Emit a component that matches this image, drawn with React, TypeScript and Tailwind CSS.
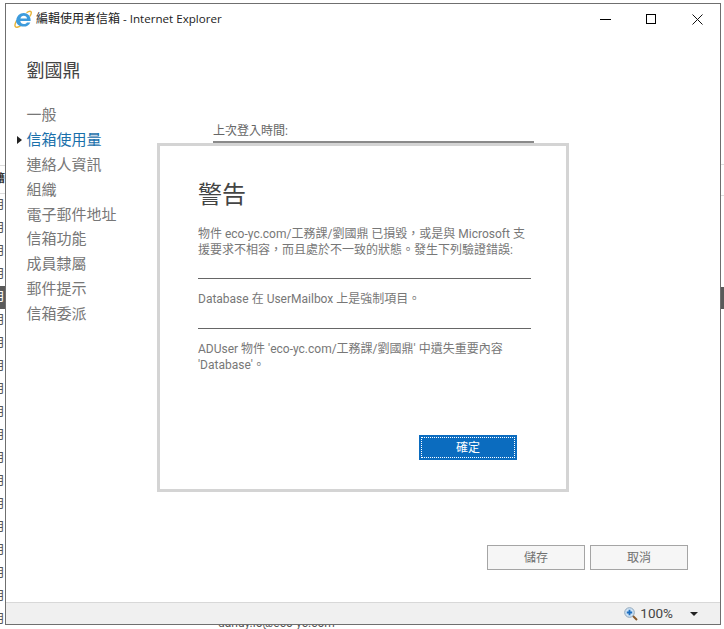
const font = "font-['Roboto','Noto_Sans_CJK_TC',sans-serif]";

const navItems = ["一般", "信箱使用量", "連絡人資訊", "組織", "電子郵件地址", "信箱功能", "成員隸屬", "郵件提示", "信箱委派"];

function IeLogo() {
  return (
    <svg width="18" height="18" viewBox="0 0 18 18" fill="none" aria-hidden>
      <path d="M2.600 10.500C1 13.500.4 16 1.600 16.900c1.300.9 3.700-.1 5.900-1.900" stroke="#e8b63c" strokeWidth="1.500" />
      <path d="M12.500 2.800C14.500 1.400 16.300.9 17 1.700c.7.900.1 2.700-1.100 4.600" stroke="#e8b63c" strokeWidth="1.400" />
      <path d="M2.300 10.200C2.500 6 5.700 2.900 9.800 2.900c3.900 0 6.800 2.900 6.800 7.100v1H6.300c.2 1.900 1.700 3 3.500 3 1.400 0 2.500-.6 3.100-1.600h3.400c-1 2.700-3.500 4.200-6.500 4.200-4.100 0-7.900-2.300-7.800-6.400Zm4.100-1.700h6.700c-.2-1.600-1.600-2.800-3.300-2.800-1.800 0-3.100 1.100-3.400 2.800Z" fill="#3d9bdc" />
    </svg>
  );
}

function ZoomIcon() {
  return (
    <svg width="14" height="14" viewBox="0 0 14 14" fill="none" aria-hidden>
      <path d="M8.500 8.500 13 13" stroke="#8a5a2b" strokeWidth="2" />
      <circle cx="5.500" cy="5.500" r="4.800" fill="#cfe3f5" stroke="#8fa6bb" />
      <path d="M5.500 2.800v5.400M2.800 5.500h5.400" stroke="#1f6fc0" strokeWidth="1.800" />
    </svg>
  );
}

function BackgroundSliver() {
  return (
    <div className="flex h-full w-[5px] shrink-0 flex-col overflow-hidden pt-[165px]">
      <div className="flex h-[28.500px] shrink-0 items-center justify-end border-y border-[#dcdcdc] text-[11px] font-bold text-[#333]">籍</div>
      {Array.from({ length: 19 }).map((_, i) => (
        <div
          key={i}
          className={`flex h-[23px] shrink-0 items-center justify-end whitespace-nowrap text-[12px] ${
            i === 4 ? "bg-[#5a5a5a] text-white" : "text-[#555]"
          }`}
        >
          月
        </div>
      ))}
    </div>
  );
}

function WindowButton({ children }: { children: React.ReactNode }) {
  return <div className="flex h-[30px] w-[46px] items-center justify-center">{children}</div>;
}

export default function App() {
  return (
    <div className={`relative h-[629px] w-[724px] overflow-hidden bg-white ${font}`}>
      {/* page text showing under the window */}
      <div className="absolute left-[218px] top-[614px] text-[12px] text-[#555]">danuy.lo@eco-yc.com</div>

      <div className="flex h-full">
        <BackgroundSliver />

        <div className="flex h-[622px] w-[716px] shrink-0 translate-y-[3px] flex-col border border-[#6f6f6f] bg-white">
          {/* title bar */}
          <div className="flex h-[30px] shrink-0 items-center pl-[8px]">
            <IeLogo />
            <span className="ml-[4px] text-[12px] text-[#222]">
              編輯使用者信箱<span className="font-['Open_Sans',sans-serif] text-[11.600px]"> - Internet Explorer</span>
            </span>
            <div className="ml-auto flex">
              <WindowButton>
                <div className="h-px w-[11px] bg-black" />
              </WindowButton>
              <WindowButton>
                <div className="h-[10px] w-[10px] border border-black" />
              </WindowButton>
              <WindowButton>
                <svg width="11" height="11" viewBox="0 0 11 11" stroke="#111" aria-hidden>
                  <path d="M.500.500l10 10M10.500.500l-10 10" />
                </svg>
              </WindowButton>
            </div>
          </div>

          <div className="flex min-h-0 flex-1">
            <div className="w-[207px] shrink-0 pl-[20.500px] pt-[25px]">
              <h1 className="text-[18px] leading-[24px] font-normal text-[#444]">劉國鼎</h1>
              <ul className="mt-[20px]">
                {navItems.map((item, i) => (
                  <li
                    key={item}
                    className={`relative h-[24.900px] text-[15px] leading-[24.900px] ${i === 1 ? "text-[#1a70ab]" : "text-[#777]"}`}
                  >
                    {i === 1 && (
                      <span className="absolute left-[-9.500px] top-[8px] h-0 w-0 border-y-[4px] border-l-[5px] border-y-transparent border-l-[#222]" />
                    )}
                    {item}
                  </li>
                ))}
              </ul>
            </div>
            <div className="w-[321px] pt-[89px]">
              <div className="text-[12px] leading-[16px] text-[#666]">上次登入時間:</div>
              <div className="mt-[2px] h-[2px] bg-[#8a8a8a]" />
            </div>
          </div>

          {/* footer buttons */}
          <div className="flex shrink-0 justify-end gap-[5px] pb-[32px] pr-[32px]">
            <button className="h-[25px] w-[98px] border border-[#a5a5a5] bg-[#f6f6f6] text-[12px] text-[#707070]">儲存</button>
            <button className="h-[25px] w-[98px] border border-[#a5a5a5] bg-[#f6f6f6] text-[12px] text-[#707070]">取消</button>
          </div>

          {/* status bar */}
          <div className="flex h-[22px] shrink-0 items-center justify-end border-t border-[#d8d8d8] bg-[#f0f0f0] text-[13.500px] text-[#444]">
            <ZoomIcon />
            <span className="ml-[2px]">100%</span>
            <span className="ml-[17px] h-0 w-0 border-x-[4px] border-t-[4px] border-x-transparent border-t-[#222]" />
            <span className="w-[22px]" />
          </div>
        </div>

        <div className="flex w-[3px] shrink-0 flex-col pt-[164px]">
          <div className="h-[32px] shrink-0 border-y border-[#dddddd]" />
          <div className="mt-[91px] h-[22px] bg-[#5a5a5a]" />
        </div>
      </div>

      {/* warning dialog */}
      <div className="absolute left-[157px] top-[143px] flex h-[349px] w-[412px] flex-col border-[3px] border-[#d4d4d4] bg-white pl-[38px] pr-[35px] pt-[33px]">
        <h2 className="text-[24px] leading-[32px] font-normal text-[#444]">警告</h2>
        <p className="mt-[15px] w-[330px] text-[12px] leading-[16px] text-[#777]">
          {"物件 eco-yc.com/工務課/劉國鼎 已損毀\uFF0C或是與 Microsoft 支援要求不相容\uFF0C而且處於不一致的狀態。發生下列驗證錯誤:"}
        </p>
        <div className="mt-[20px] h-px bg-[#666]" />
        <p className="mt-[12px] text-[12px] leading-[16px] text-[#777]">Database 在 UserMailbox 上是強制項目。</p>
        <div className="mt-[21px] h-px bg-[#666]" />
        <p className="mt-[12px] text-[12px] leading-[16px] text-[#777]">
          ADUser 物件 'eco-yc.com/工務課/劉國鼎' 中遺失重要內容 'Database'。
        </p>
        <div className="mt-[62px] flex justify-end pr-[14px]">
          <button className="h-[25px] w-[98px] bg-[#0b6cbf] p-[2px] text-[12px] text-white">
            <span className="flex h-full w-full items-center justify-center border border-dotted border-white">確定</span>
          </button>
        </div>
      </div>
    </div>
  );
}
